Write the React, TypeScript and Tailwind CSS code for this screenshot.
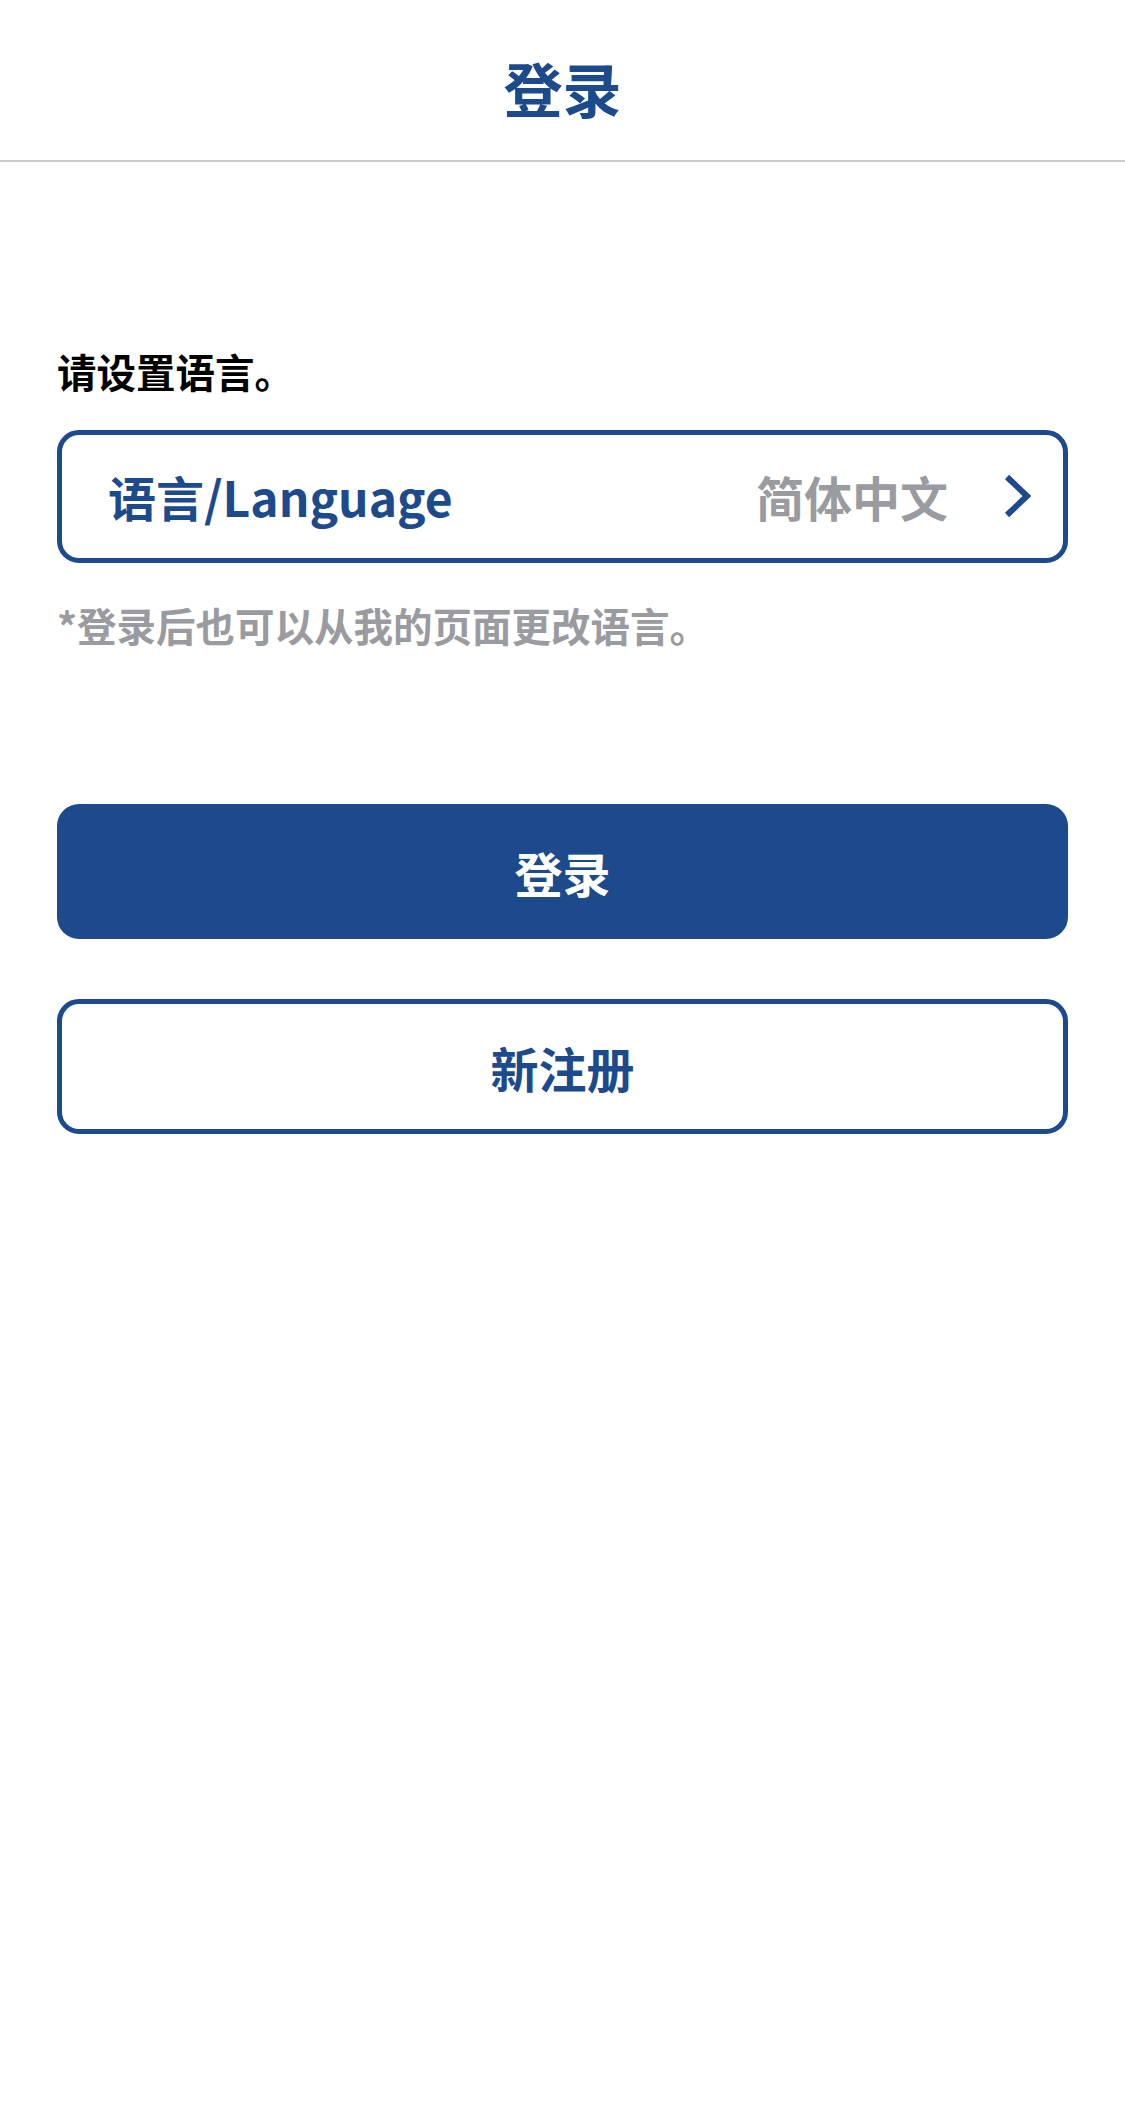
const BLUE = '#1c4a8c';

const ChevronRight = () => (
  <svg width="30" height="46" viewBox="0 0 30 46" fill="none">
    <polyline
      points="4,4 24,23 4,42"
      stroke={BLUE}
      strokeWidth="6"
      strokeLinecap="butt"
      strokeLinejoin="miter"
    />
  </svg>
);

const App = () => {
  return (
    <div
      className="w-full min-h-[2128px] bg-white"
      style={{ fontFamily: '"Noto Sans CJK SC", "Noto Sans", sans-serif' }}
    >
      <header className="h-[162px] border-b-2 border-[#c9c9cc] flex justify-center pt-[58px]">
        <h1 className="text-[59px] leading-none font-bold text-[#1c4a8c]">登录</h1>
      </header>

      <main className="px-[57px] flex flex-col">
        <p className="mt-[189px] text-[39.5px] leading-none font-bold text-black">请设置语言。</p>

        <button className="mt-[39px] h-[133px] w-full border-[5px] border-[#1c4a8c] rounded-[22px] flex items-center pl-[46px] pr-[30px]">
          <span className="text-[48px] leading-none font-bold text-[#1c4a8c]">语言/Language</span>
          <span className="ml-auto text-[48px] leading-none font-bold text-[#9a9ba0]">简体中文</span>
          <span className="ml-[55px] flex items-center">
            <ChevronRight />
          </span>
        </button>

        <p className="mt-[42px] text-[39.5px] leading-none font-bold text-[#9a9ba0]">
          *登录后也可以从我的页面更改语言。
        </p>

        <button className="mt-[160px] h-[135px] w-full rounded-[22px] bg-[#1c4a8c] flex items-center justify-center">
          <span className="text-[48px] leading-none font-bold text-white">登录</span>
        </button>

        <button className="mt-[60px] h-[135px] w-full rounded-[22px] border-[5px] border-[#1c4a8c] bg-white flex items-center justify-center">
          <span className="text-[48px] leading-none font-bold text-[#1c4a8c]">新注册</span>
        </button>
      </main>
    </div>
  );
};

export default App;
